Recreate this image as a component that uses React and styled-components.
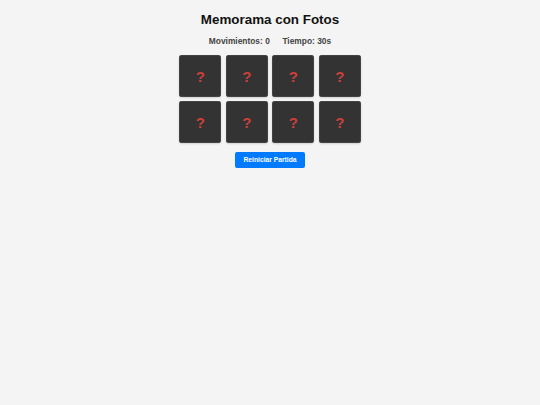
import React, { useState } from "react";
import styled, { createGlobalStyle } from "styled-components";

const GlobalStyle = createGlobalStyle`
  html, body {
    margin: 0;
    padding: 0;
    background: #f4f4f4;
    font-family: "Liberation Sans", Arial, sans-serif;
  }
`;

const Page = styled.main`
  display: flex;
  flex-direction: column;
  align-items: center;
  padding-top: 12px;
`;

const Title = styled.h1`
  margin: 0;
  font-size: 13.4px;
  font-weight: bold;
  color: #111;
`;

const Stats = styled.div`
  display: flex;
  gap: 12.6px;
  margin-top: 8.6px;
  font-size: 8.4px;
  font-weight: bold;
  color: #444;
`;

const Board = styled.div`
  display: grid;
  grid-template-columns: repeat(4, 42px);
  grid-auto-rows: 42px;
  gap: 4.4px 4.5px;
  margin-top: 9.5px;
`;

const Card = styled.div`
  display: flex;
  align-items: center;
  justify-content: center;
  background: #333;
  border-radius: 3px;
  box-shadow: 0 0 0 0.5px #555 inset, 0 1px 2px rgba(0, 0, 0, 0.15);
  color: #cc3f3a;
  font-size: 15px;
  font-weight: bold;
  cursor: pointer;
`;

const Button = styled.button`
  margin-top: 8.8px;
  padding: 4.2px 8.4px;
  border: none;
  border-radius: 2px;
  background: #007bff;
  color: #fff;
  font-family: "Liberation Sans", Arial, sans-serif;
  font-size: 6.72px;
  font-weight: bold;
  line-height: 1.15;
  cursor: pointer;
`;

export default function App() {
  const [moves] = useState(0);
  const [time] = useState(30);
  const cards = Array.from({ length: 8 }, (_, i) => i);

  return (
    <>
      <GlobalStyle />
      <Page>
        <Title>Memorama con Fotos</Title>
        <Stats>
          <span>Movimientos: {moves}</span>
          <span>Tiempo: {time}s</span>
        </Stats>
        <Board>
          {cards.map((c) => (
            <Card key={c}>?</Card>
          ))}
        </Board>
        <Button>Reiniciar Partida</Button>
      </Page>
    </>
  );
}
